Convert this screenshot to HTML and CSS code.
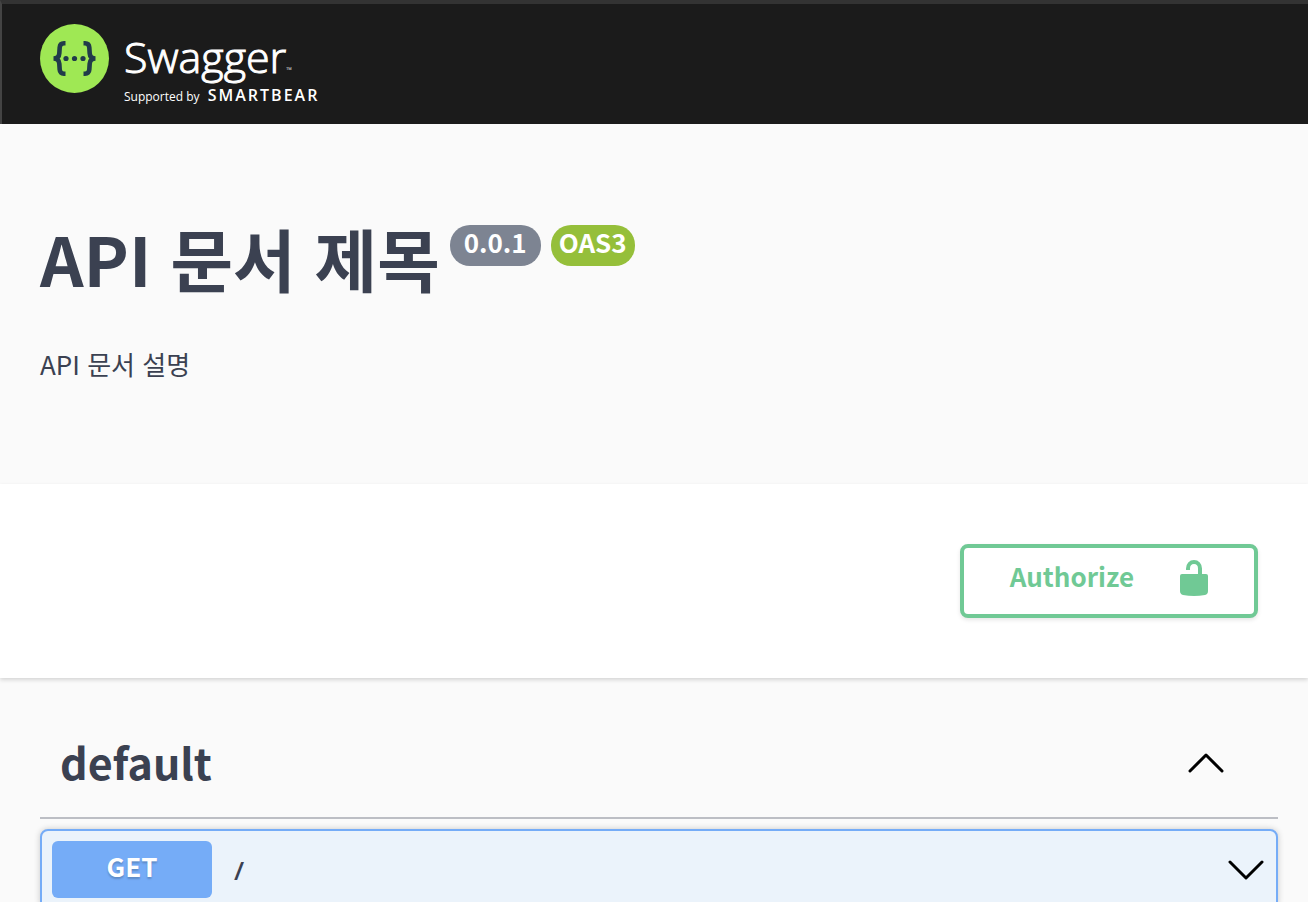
FILE: index.html
```html
<!DOCTYPE html>
<html lang="ko">
<head>
  <meta charset="UTF-8" />
  <meta name="viewport" content="width=device-width, initial-scale=1.0"/>
  <title>Swagger UI</title>
  <link rel="stylesheet" href="styles.css">
</head>
<body>

  <header class="topbar">
    <a class="logo" href="#">
      <svg class="logo-mark" viewBox="0 0 70 70" aria-hidden="true">
        <circle cx="34.5" cy="34.5" r="34.5" fill="#9fe854"/>
        <g fill="none" stroke="#213b4a" stroke-width="4.6">
          <path d="M25.500 19.300H24q-4 0-4.300 4l-.4 6q-.3 5.200-5.800 5.200 5.500 0 5.800 5.200l.4 6q.3 4 4.300 4h1.500"/>
          <path d="M43.500 19.300H45q4 0 4.300 4l.4 6q.3 5.200 5.800 5.200-5.500 0-5.800 5.200l-.4 6q-.3 4-4.300 4h-1.500"/>
        </g>
        <g fill="#213b4a">
          <circle cx="26" cy="34.5" r="2.6"/>
          <circle cx="34.5" cy="34.5" r="2.6"/>
          <circle cx="43" cy="34.5" r="2.6"/>
        </g>
      </svg>
      <span class="logo-text">
        <span class="logo-name">Swagger<small>™</small></span>
        <span class="logo-by">Supported by <b>SMARTBEAR</b></span>
      </span>
    </a>
  </header>

  <section class="info">
    <div class="info-title">
      <h1>API 문서 제목</h1>
      <span class="badge version">0.0.1</span>
      <span class="badge oas">OAS3</span>
    </div>
    <p>API 문서 설명</p>
  </section>

  <section class="scheme">
    <button class="authorize" type="button">
      <span>Authorize</span>
      <svg width="28" height="36" viewBox="0 0 28 36" aria-hidden="true">
        <path d="M8 10V8.500C8 4.500 10.500 2 14 2s6 2.500 6 6.500V16" fill="none" stroke="#70c995" stroke-width="4"/>
        <path d="M2 14h24q2 0 2 2v15q0 3-3 4-11 2-22 0-3-1-3-4V16q0-2 2-2z" fill="#70c995"/>
      </svg>
    </button>
  </section>

  <main class="operations">
    <div class="tag">
      <h2>default</h2>
      <button class="arrow" type="button" aria-label="Collapse default">
        <svg width="36" height="20" viewBox="0 0 36 20" aria-hidden="true"><path d="M2 18 18 2l16 16"/></svg>
      </button>
    </div>
    <div class="opblock">
      <button class="method" type="button">GET</button>
      <a class="path" href="#">/</a>
      <button class="arrow" type="button" aria-label="Expand operation">
        <svg width="36" height="20" viewBox="0 0 36 20" aria-hidden="true"><path d="M2 2l16 16L34 2"/></svg>
      </button>
    </div>
  </main>

</body>
</html>
```

FILE: styles.css
```css
* {
  box-sizing: border-box;
}
html {
  scrollbar-width: none;
}
body {
  margin: 0;
  background: #fafafa;
  color: #3b4151;
  font-family: "Noto Sans CJK KR", "Noto Sans", sans-serif;
}
h1, h2, p {
  margin: 0;
}
a {
  color: inherit;
  text-decoration: none;
}
button {
  font-family: inherit;
  cursor: pointer;
}
svg {
  display: block;
}
.topbar {
  height: 124px;
  padding: 20px 38px;
  background: #1b1b1b;
  border-top: 4px solid #333;
  border-left: 2px solid #444;
}
.logo {
  display: flex;
  gap: 14px;
  color: #fff;
  font-family: "Open Sans", sans-serif;
}
.logo-mark {
  width: 70px;
  height: 70px;
}
.logo-text {
  display: flex;
  flex-direction: column;
  padding-top: 8px;
}
.logo-name {
  font-size: 43px;
  line-height: 50px;
  font-weight: 300;
  -webkit-text-stroke: 1px #fff;
}
.logo-name small {
  font-size: 8px;
  line-height: 1;
  -webkit-text-stroke: 0;
}
.logo-by {
  font-size: 12px;
  line-height: 26px;
}
.logo-by b {
  margin-left: 5px;
  font-size: 16px;
  font-weight: 600;
  letter-spacing: 2px;
}
.info {
  padding: 92px 40px 100px;
}
.info-title {
  display: flex;
  align-items: flex-start;
  gap: 10px;
}
h1 {
  font-size: 68px;
  line-height: 84px;
}
.badge {
  margin-top: 9px;
  border-radius: 20px;
  color: #fff;
  font-size: 26px;
  font-weight: bold;
  line-height: 34px;
  padding-bottom: 7px;
}
.version {
  padding-left: 14px;
  padding-right: 14px;
  background: #7d8492;
}
.oas {
  padding-left: 8px;
  padding-right: 8px;
  background: #95bf3a;
}
.info p {
  margin-top: 44px;
  font-size: 26px;
  line-height: 40px;
}
.scheme {
  display: flex;
  justify-content: flex-end;
  padding: 60px 50px;
  background: #fff;
  box-shadow: 0 2px 4px rgba(0, 0, 0, 0.15);
}
.authorize {
  display: flex;
  gap: 46px;
  padding: 12px 46px 18px;
  border: 4px solid #70c995;
  border-radius: 8px;
  background: #fff;
  box-shadow: 0 2px 4px rgba(0, 0, 0, 0.1);
  color: #70c995;
  font-size: 26px;
  font-weight: bold;
  line-height: 32px;
}
.operations {
  padding: 40px 30px 0 40px;
}
.tag {
  display: flex;
  align-items: center;
  justify-content: space-between;
  padding: 15px 54px 24px 20px;
  border-bottom: 2px solid #bcbec4;
}
h2 {
  padding-bottom: 4px;
  font-size: 43px;
  line-height: 56px;
}
.arrow {
  padding: 0;
  border: 0;
  background: none;
}
.arrow path {
  fill: none;
  stroke: #000;
  stroke-width: 3;
  stroke-linecap: round;
  stroke-linejoin: round;
}
.opblock {
  display: flex;
  align-items: center;
  margin-top: 10px;
  padding: 10px 12px 10px 10px;
  border: 2px solid #75acf7;
  border-radius: 8px;
  background: #ebf3fb;
  box-shadow: 0 0 6px rgba(0, 0, 0, 0.2);
}
.method {
  width: 160px;
  padding: 7px 0 14px;
  border: 0;
  border-radius: 6px;
  background: #75acf7;
  color: #fff;
  font-size: 26px;
  font-weight: bold;
  line-height: 36px;
  text-shadow: 0 2px 2px rgba(0, 0, 0, 0.2);
}
.path {
  flex: 1;
  padding-left: 22px;
  font-family: "Open Sans", sans-serif;
  font-size: 26px;
  font-weight: 600;
  line-height: 36px;
}
```
